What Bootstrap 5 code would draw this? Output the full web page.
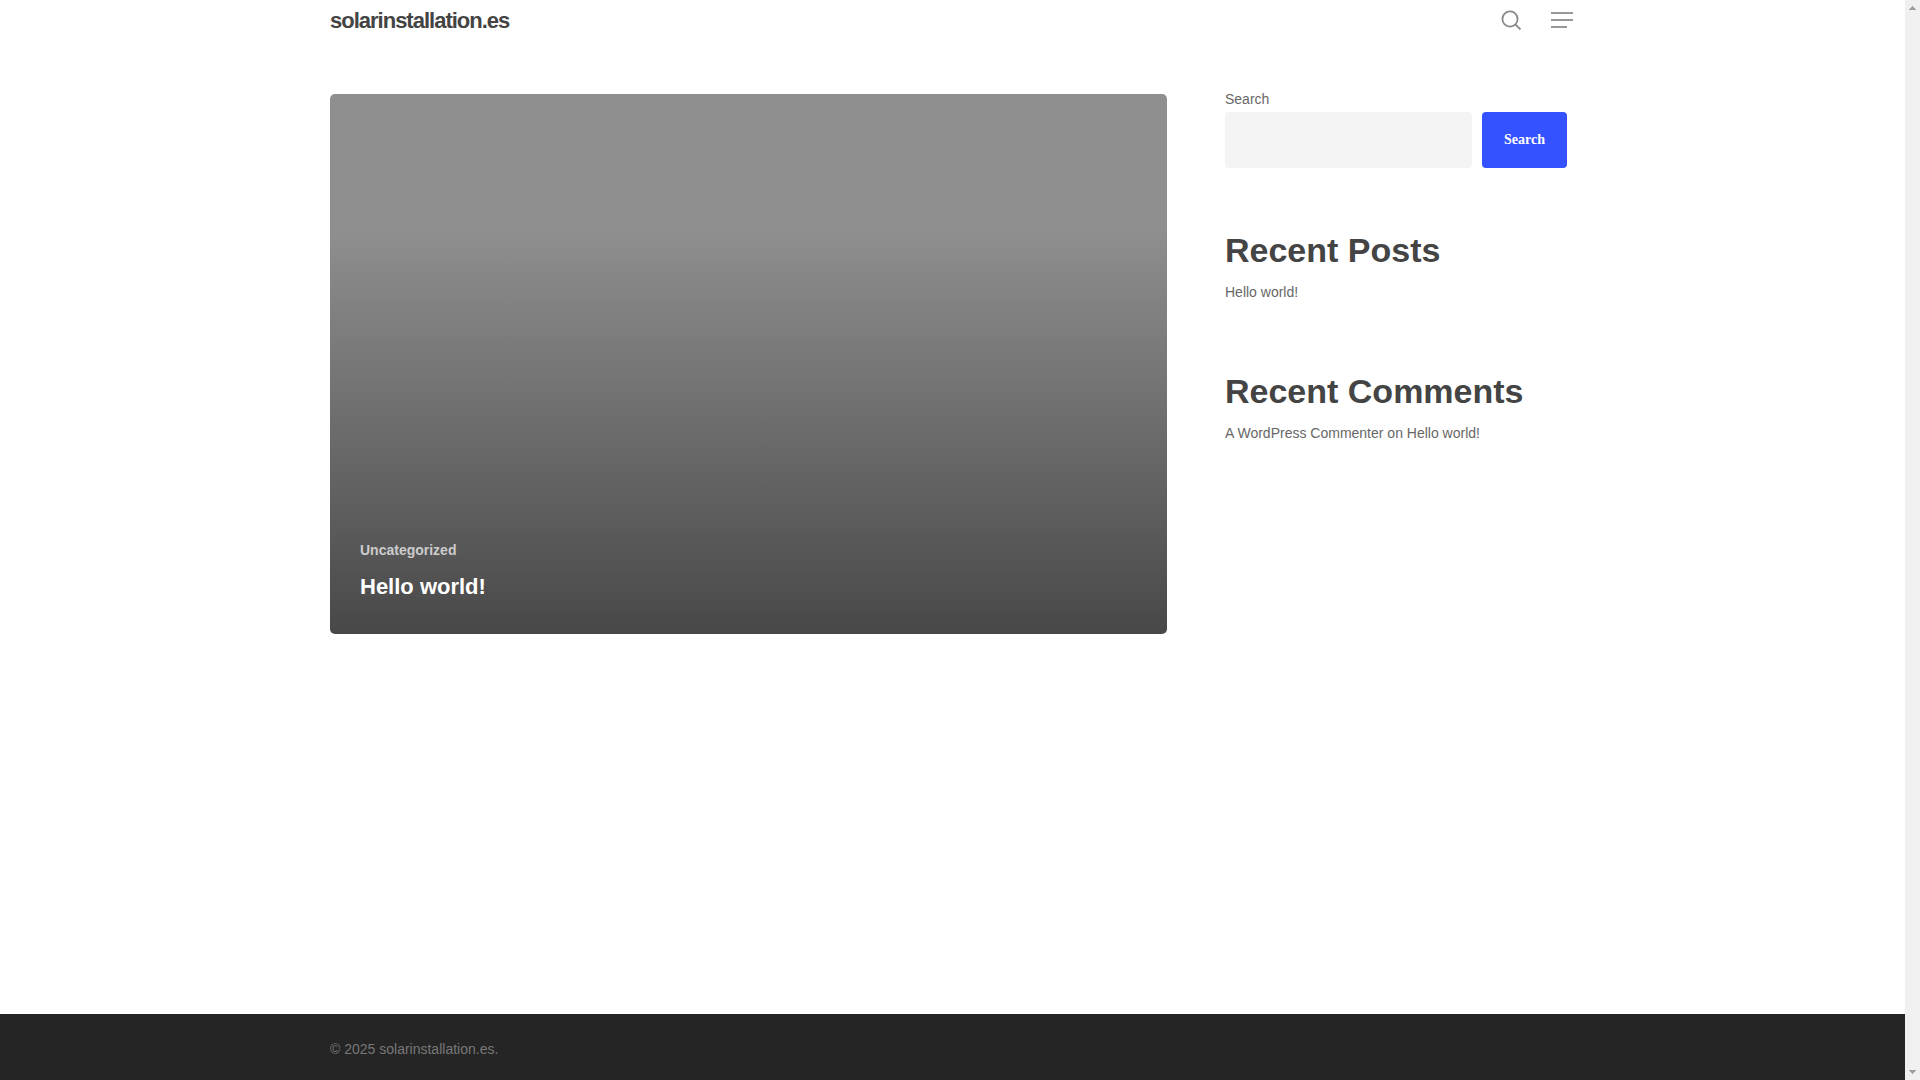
<!DOCTYPE html>
<html lang="en">
<head>
<meta charset="utf-8">
<meta name="viewport" content="width=device-width, initial-scale=1">
<title>solarinstallation.es</title>
<link href="https://cdn.jsdelivr.net/npm/bootstrap@5.3.0/dist/css/bootstrap.min.css" rel="stylesheet">
<style>
  body { font-family: "Liberation Sans", Arial, sans-serif; font-size: 14px; line-height: 26px; color: #676767; }
  a { color: inherit; text-decoration: none; }
  .wrap { width: 100%; max-width: 1425px; margin: 0 auto; padding: 0 90px; }
  .brand { font-size: 22px; line-height: 22px; padding-top: 2px; font-weight: 700; letter-spacing: -1px; color: #444; }
  .tool { border: 0; background: none; padding: 0; color: #888; line-height: 0; }
  .top-bar { height: 40px; }
  .main-area { padding-top: 54px; }
  .content-row { gap: 58px; }
  .post-tile { height: 540px; padding: 32px 30px; border-radius: 5px; color: #fff; background: linear-gradient(#8f8f8f 25%, #484848); }
  .post-cat { line-height: 20px; font-weight: 700; color: #ccc; margin-bottom: 12px; }
  .post-title { font-size: 22px; line-height: 30px; font-weight: 700; margin: 0; }
  .sidebar { flex: 0 0 350px; padding-right: 8px; margin-top: -8px; }
  .search-row { gap: 10px; }
  .search-input { height: 56px; border: 0; border-radius: 4px; background: #f4f4f4; }
  .search-btn { height: 56px; width: 85px; border: 0; border-radius: 4px; background: #3452ff; color: #fff; font: 700 14px/20px "Liberation Serif", serif; padding: 0; }
  .search-btn:hover { background: #2442ee; color: #fff; }
  .search-form { margin-bottom: 60px; }
  .widget { margin-bottom: 64px; }
  .widget h2 { font-size: 34px; line-height: 44px; font-weight: 700; color: #444; margin: 0 0 7px; }
  .widget p { margin: 0; }
  .site-footer { background: #252525; color: #777; padding: 22px 0 18px; }
  .scroll-track { width: 15px; background: #f0f0f0; padding: 6px 0; flex: none; position: sticky; top: 0; height: 100vh; }
  @media (max-width: 999px) {
    .wrap { padding: 0 24px; }
    .content-row { flex-direction: column; }
    .sidebar { flex-basis: auto; margin-top: 0; }
  }
</style>
<script src="https://cdn.jsdelivr.net/npm/bootstrap@5.3.0/dist/js/bootstrap.bundle.min.js" defer></script>
</head>
<body class="d-flex bg-white">
<div class="d-flex flex-column flex-grow-1 min-vh-100">
  <header>
    <div class="wrap top-bar d-flex align-items-center justify-content-between">
      <a class="brand" href="#">solarinstallation.es</a>
      <div class="d-flex align-items-center">
        <button class="tool me-4" type="button" aria-label="Open search">
          <svg width="26" height="20" viewBox="0 0 26 20" fill="none" stroke="currentColor" stroke-width="1.8"><circle cx="9" cy="9" r="7.6"/><path d="M14.3 14.3 19.5 19.5"/></svg>
        </button>
        <button class="tool" type="button" aria-label="Menu">
          <svg width="24" height="16" viewBox="0 0 24 16" fill="#999"><path d="M0 0h22v2H0zM0 7h22v2H0zM0 14h16v2H0z"/></svg>
        </button>
      </div>
    </div>
  </header>
  <main class="main-area flex-grow-1">
    <div class="wrap content-row d-flex">
      <article class="post-tile flex-grow-1 d-flex flex-column justify-content-end align-items-start">
        <a class="post-cat" href="#">Uncategorized</a>
        <h3 class="post-title"><a href="#">Hello world!</a></h3>
      </article>
      <aside class="sidebar">
        <form class="search-form">
          <label class="d-block" for="site-search">Search</label>
          <div class="search-row d-flex">
            <input class="search-input form-control" id="site-search" type="search">
            <button class="search-btn btn flex-shrink-0" type="submit">Search</button>
          </div>
        </form>
        <section class="widget">
          <h2>Recent Posts</h2>
          <p><a href="#">Hello world!</a></p>
        </section>
        <section class="widget">
          <h2>Recent Comments</h2>
          <p><a href="#">A WordPress Commenter</a> on <a href="#">Hello world!</a></p>
        </section>
      </aside>
    </div>
  </main>
  <footer class="site-footer">
    <div class="wrap">© 2025 solarinstallation.es.</div>
  </footer>
</div>
<div class="scroll-track d-flex flex-column align-items-center justify-content-between" aria-hidden="true">
  <svg width="7" height="4" viewBox="0 0 7 4" fill="#a0a0a0" shape-rendering="crispEdges"><path d="M3 0h1v1h1v1h1v1h1v1H0V3h1V2h1V1h1z"/></svg>
  <svg width="7" height="4" viewBox="0 0 7 4" fill="#a0a0a0" shape-rendering="crispEdges"><path d="M0 0h7v1H6v1H5v1H4v1H3V3H2V2H1V1H0z"/></svg>
</div>
</body>
</html>
